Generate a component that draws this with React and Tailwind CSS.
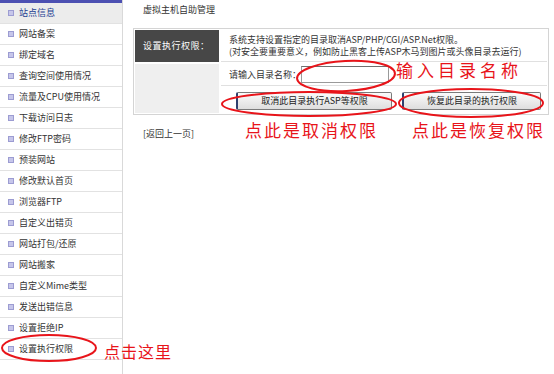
import React from 'react';

const menu = [
  '站点信息',
  '网站备案',
  '绑定域名',
  '查询空间使用情况',
  '流量及CPU使用情况',
  '下载访问日志',
  '修改FTP密码',
  '预装网站',
  '修改默认首页',
  '浏览器FTP',
  '自定义出错页',
  '网站打包/还原',
  '网站搬家',
  '自定义Mime类型',
  '发送出错信息',
  '设置拒绝IP',
  '设置执行权限',
];

const font = { fontFamily: '"Noto Sans CJK SC", "Liberation Sans", sans-serif' };

const App = () => {
  return (
    <div className="relative w-[554px] h-[374px] bg-white flex overflow-hidden text-[9px] text-[#333]" style={font}>
      {/* sidebar */}
      <div className="w-[123px] shrink-0 border-r border-[#d9d9d9] flex flex-col">
        <div className="h-[3px] bg-[#4c50b2]" />
        {menu.map((item, i) => (
          <div
            key={item}
            className={
              i === 0
                ? 'h-[21px] flex items-center pl-[8px] border-b border-[#e2e2e2] bg-[#ececec] text-[#1d3f92]'
                : 'h-[21px] flex items-center pl-[8px] border-b border-[#e2e2e2] text-[#333]'
            }
          >
            <span className="w-[6px] h-[6px] bg-[#c6c6ea] border border-[#9c9cd2] mr-[5px]" />
            {item}
          </div>
        ))}
      </div>

      {/* main */}
      <div className="flex-1 pl-[10px] pr-[5px]">
        <div className="h-[28px] pt-[3px] pl-[10px] text-[#333]">虚拟主机自助管理</div>

        <div className="border border-[#d4d4d4] p-px bg-white">
          <div className="grid grid-cols-[84px_1fr] gap-[2px]">
            <div className="h-[32px] bg-[#474747] text-white flex items-center pl-[8px] tracking-[0.5px]">设置执行权限：</div>
            <div className="h-[32px] bg-white border-b border-[#e0e0e0] flex flex-col justify-center pl-[8px] leading-[12px]">
              <span>系统支持设置指定的目录取消ASP/PHP/CGI/ASP.Net权限。</span>
              <span>(对安全要重要意义，例如防止黑客上传ASP木马到图片或头像目录去运行)</span>
            </div>
            <div className="row-span-2 bg-[#efefef]" />
            <div className="h-[22px] flex items-center pl-[8px] border-b border-[#e0e0e0]">
              <span>请输入目录名称：</span>
              <span className="w-[88px] h-[17px] border border-[#9a9a9a] border-t-[#6f6f6f] bg-white" />
            </div>
            <div className="h-[25px] flex items-center pl-[15px] gap-[10px]">
              <button className="w-[156px] h-[18px] border border-[#7a7a7a] border-l-[#2e3f6e] border-l-2 rounded-[2px] bg-gradient-to-b from-[#fbfbfb] to-[#dedede] text-[9px] text-[#222]">
                取消此目录执行ASP等权限
              </button>
              <button className="w-[139px] h-[18px] border border-[#7a7a7a] border-l-[#2e3f6e] border-l-2 rounded-[2px] bg-gradient-to-b from-[#fbfbfb] to-[#dedede] text-[9px] text-[#222]">
                恢复此目录的执行权限
              </button>
            </div>
          </div>
        </div>

        <div className="pt-[12px] pl-[10px]">[返回上一页]</div>
      </div>

      {/* annotations */}
      <svg className="absolute inset-0 pointer-events-none" width="554" height="374">
        <g fill="none" stroke="#e8141a" strokeWidth="2">
          <ellipse cx="346" cy="76" rx="49" ry="15" transform="rotate(-3 346 76)" />
          <ellipse cx="309" cy="104" rx="87" ry="12" />
          <ellipse cx="471" cy="103" rx="72" ry="14" />
          <ellipse cx="49" cy="348" rx="47" ry="13" />
        </g>
      </svg>
      <div className="absolute left-[396px] top-[61px] text-[17px] tracking-[4px] text-[#e8141a] leading-none">输入目录名称</div>
      <div className="absolute left-[245px] top-[121px] text-[17px] tracking-[2px] text-[#e8141a] leading-none">点此是取消权限</div>
      <div className="absolute left-[412px] top-[121px] text-[17px] tracking-[2px] text-[#e8141a] leading-none">点此是恢复权限</div>
      <div className="absolute left-[104px] top-[343px] text-[16px] tracking-[1px] text-[#e8141a] leading-none">点击这里</div>
    </div>
  );
};

export default App;
